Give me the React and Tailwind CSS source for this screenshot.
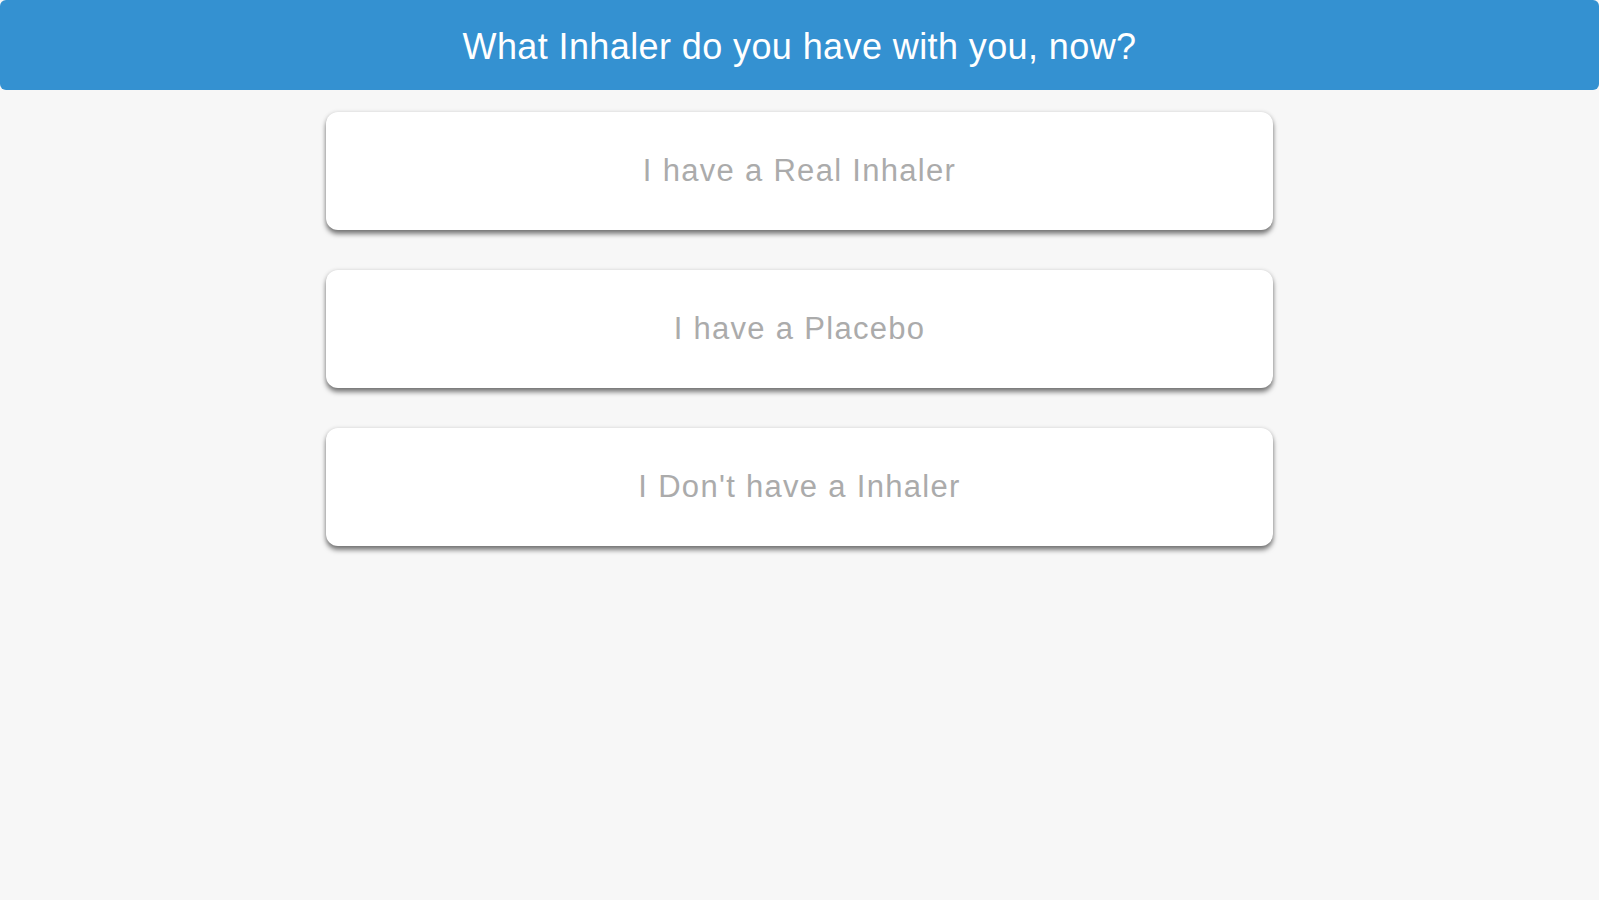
import React from "react";

const options = ["I have a Real Inhaler", "I have a Placebo", "I Don't have a Inhaler"];

function App() {
  return (
    <div className="min-h-screen bg-[#f7f7f7] font-['Liberation_Sans',Arial,sans-serif]">
      <div className="h-[90px] bg-[#3491d1] rounded-md flex items-center justify-center">
        <h1 className="text-[36px] tracking-[0.4px] text-white pt-[3px]">What Inhaler do you have with you, now?</h1>
      </div>
      <div className="flex flex-col items-center gap-[40px] pt-[22px]">
        {options.map((o) => (
          <button
            key={o}
            type="button"
            className="w-[947px] h-[118px] bg-white rounded-[12px] shadow-[0_4px_5px_rgba(0,0,0,0.5),0_0_4px_rgba(0,0,0,0.12)] text-[31px] tracking-[1.3px] text-[#ababab]"
          >
            {o}
          </button>
        ))}
      </div>
    </div>
  );
}

export default App;
